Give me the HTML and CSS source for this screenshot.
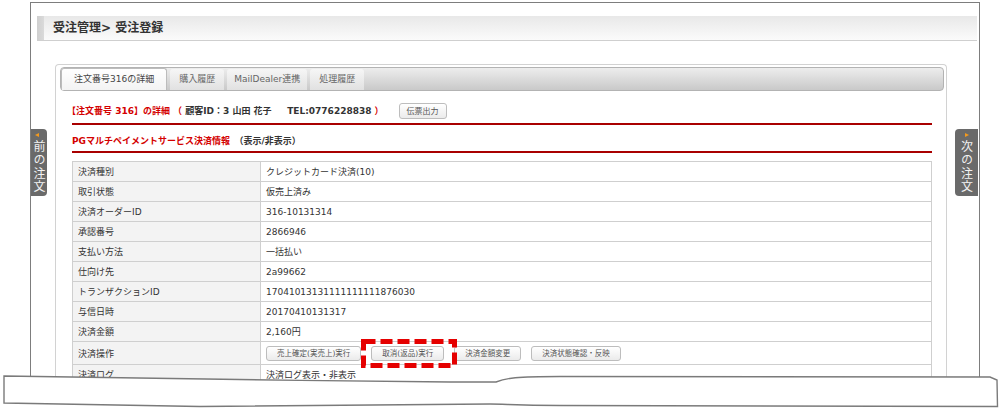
FILE: index.html
```html
<!DOCTYPE html>
<html lang="ja">
<head>
<meta charset="utf-8">
<title>受注登録</title>
<link rel="stylesheet" href="styles.css">
</head>
<body>
<div class="page">
  <div class="frame">
    <div class="title-bar">
      <span class="title-stripe"></span>
      <h1 class="title">受注管理&gt; 受注登録</h1>
    </div>
    <div class="main-row">
      <div class="side side-left">
        <a class="nav-tab nav-prev"><span class="nav-arrow arrow-left"></span><span class="nav-text">前の注文</span></a>
      </div>
      <div class="panel">
        <div class="tab-bar">
          <span class="tab tab-active">注文番号316の詳細</span>
          <span class="tab">購入履歴</span>
          <span class="tab tab-mail">MailDealer連携</span>
          <span class="tab">処理履歴</span>
        </div>
        <div class="content">
          <div class="order-block">
            <span class="order-text"><span class="red">【注文番号 316】の詳細 （</span> 顧客ID：3 山田 花子&nbsp;&nbsp;&nbsp;&nbsp; TEL:0776228838 <span class="red">）</span></span>
            <button class="btn btn-slip">伝票出力</button>
          </div>
          <div class="section-title"><span class="red">PGマルチペイメントサービス決済情報</span>　（表示/非表示）</div>
          <table class="info">
            <tr><td class="label">決済種別</td><td>クレジットカード決済(10)</td></tr>
            <tr><td class="label">取引状態</td><td>仮売上済み</td></tr>
            <tr><td class="label">決済オーダーID</td><td>316-10131314</td></tr>
            <tr><td class="label">承認番号</td><td>2866946</td></tr>
            <tr><td class="label">支払い方法</td><td>一括払い</td></tr>
            <tr><td class="label">仕向け先</td><td>2a99662</td></tr>
            <tr><td class="label">トランザクションID</td><td>17041013131111111111876030</td></tr>
            <tr><td class="label">与信日時</td><td>20170410131317</td></tr>
            <tr><td class="label">決済金額</td><td>2,160円</td></tr>
            <tr class="ops-row"><td class="label">決済操作</td><td>
              <div class="ops">
                <button class="btn">売上確定(実売上)実行</button>
                <span class="annot-wrap"><button class="btn">取消(返品)実行</button><svg class="annot" width="96" height="29" viewBox="0 0 96 29"><rect x="2.5" y="2.5" width="91" height="24" fill="none" stroke="#e50000" stroke-width="5" stroke-dasharray="12 5"/></svg></span>
                <button class="btn">決済金額変更</button>
                <button class="btn">決済状態確認・反映</button>
              </div>
            </td></tr>
            <tr><td class="label">決済ログ</td><td>決済ログ表示・非表示</td></tr>
          </table>
        </div>
      </div>
      <div class="side side-right">
        <a class="nav-tab nav-next"><span class="nav-arrow arrow-right"></span><span class="nav-text">次の注文</span></a>
      </div>
    </div>
  </div>
  <svg class="tear" width="1001" height="410" viewBox="0 0 1001 410">
    <path d="M4,376 C120,377.5 300,381 450,382 L496,382 C506,378 516,376.5 560,376.5 L990,377 L997,380 L997,410 L0,410 L0,376 Z" fill="#fff"/>
    <path d="M4,376 C120,377.5 300,381 450,382 L496,382 C506,378 516,376.5 560,376.5 L990,377 L997,380 L997.5,406.5 L560,405.5 C516,405.5 506,404 490,404 L200,406.5 C120,404.5 60,403.5 4,403 Z" fill="#fff" stroke="#7a7a7a" stroke-width="1.4"/>
  </svg>
</div>
</body>
</html>
```

FILE: styles.css
```css
* { box-sizing: border-box; }
html, body { margin: 0; padding: 0; background: #fff; }
body {
  font-family: "DejaVu Sans", "Noto Sans CJK JP", sans-serif;
  font-size: 9px;
  color: #333;
}
.page { position: relative; width: 1001px; height: 410px; overflow: hidden; }

.frame {
  margin: 2px 0 0 30px;
  width: 950px;
  height: 440px;
  border: 1px solid #7d7d7d;
  border-bottom: none;
}
.title-bar {
  display: flex;
  height: 25px;
  margin: 13px 2px 0 6px;
  background: linear-gradient(#e8e8e8, #fbfbfb);
  border-bottom: 1px solid #cfcfcf;
}
.title-stripe { width: 7px; background: linear-gradient(90deg, #cfcfcf, #dadada); }
.title {
  margin: 0 0 0 9px;
  font-size: 12px;
  font-weight: bold;
  line-height: 24px;
  color: #333;
}

.main-row { display: flex; align-items: flex-start; margin-top: 23px; }
.side { flex: none; }
.side-left { width: 24px; padding-top: 65px; }
.side-right { width: 32px; padding-top: 65px; display: flex; justify-content: flex-end; padding-right: 1px; }

.nav-tab {
  display: flex;
  flex-direction: column;
  align-items: center;
  height: 67px;
  background: #6a6a6a;
  color: #f2f2f2;
  padding-top: 4px;
}
.nav-prev { width: 16px; border-radius: 0 4px 4px 0; }
.nav-next { width: 23px; border-radius: 4px 0 0 4px; }
.nav-arrow { width: 0; height: 0; border-top: 2.5px solid transparent; border-bottom: 2.5px solid transparent; }
.arrow-left { border-right: 4px solid #f39a1e; margin-left: -4px; }
.arrow-right { border-left: 4px solid #f39a1e; }
.nav-text {
  writing-mode: vertical-rl;
  text-orientation: upright;
  font-family: "Noto Sans CJK JP", sans-serif;
  font-size: 12px;
  line-height: 12px;
  letter-spacing: 1.6px;
  margin-top: 3px;
}

.panel {
  flex: none;
  width: 892px;
  height: 360px;
  border: 1px solid #d2d2d2;
  border-bottom: none;
  border-radius: 4px 4px 0 0;
}
.tab-bar {
  display: flex;
  align-items: flex-end;
  gap: 3px;
  height: 24px;
  margin: 2px 2px 0 4px;
  border: 1px solid #b3b3b3;
  border-radius: 4px;
  background: linear-gradient(#ededed, #c9c9c9);
}
.tab {
  height: 21px;
  line-height: 21px;
  padding: 0 9px;
  color: #666;
  background: linear-gradient(#f6f6f6, #e1e1e1);
  border-radius: 3px 3px 0 0;
}
.tab-mail { padding: 0 7px; }
.tab-active {
  padding: 0 12px;
  color: #444;
  background: linear-gradient(#ffffff, #f3f3f3);
  border: 1px solid #bcbcbc;
  border-bottom: none;
  height: 22px;
}

.content { padding: 0 14px 0 16px; }
.red { color: #d40000; }
.order-block {
  display: flex;
  align-items: center;
  gap: 15px;
  margin-top: 12px;
  padding-bottom: 4px;
  border-bottom: 2px solid #a90000;
}
.order-text { font-weight: bold; line-height: 16px; margin-left: -5px; }

.btn {
  font-family: "DejaVu Sans", "Noto Sans CJK JP", sans-serif;
  font-size: 7.5px;
  height: 15px;
  line-height: 13px;
  padding: 0 10px;
  color: #555;
  border: 1px solid #bdbdbd;
  border-radius: 3px;
  background: linear-gradient(#ffffff, #ebebeb);
}
.btn-slip { height: 16px; font-size: 8px; padding: 0 7px; }

.section-title {
  margin-top: 8px;
  line-height: 16px;
  font-weight: bold;
  padding-bottom: 2px;
  border-bottom: 2px solid #a90000;
}

.info {
  width: 100%;
  margin-top: 8px;
  border-collapse: collapse;
}
.info td {
  height: 20px;
  padding: 0 5px;
  border: 1px solid #cfcfcf;
  color: #333;
  white-space: nowrap;
}
.info td.label { width: 188px; background: #f3f3f3; }
.info .ops-row td { height: 23px; }
.ops { display: flex; align-items: center; }
.ops .btn { margin-right: 10px; }
.annot-wrap { position: relative; display: inline-flex; }
.annot-wrap .btn { margin-right: 10px; }
.annot { position: absolute; left: -10px; top: -7px; }

.tear { position: absolute; left: 0; top: 0; }
```
